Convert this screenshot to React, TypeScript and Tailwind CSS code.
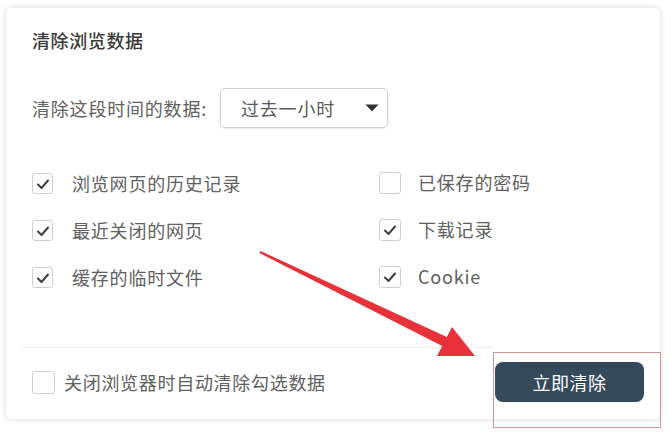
import React from 'react';

const font = { fontFamily: '"Noto Sans CJK SC", "Noto Sans", sans-serif' };

function Check({ checked, size = 'w-[21px] h-[21px]' }: { checked: boolean; size?: string }) {
  return (
    <span className={`${size} shrink-0 rounded-[3px] border border-[#cfcfcf] bg-white flex items-center justify-center`}>
      {checked && (
        <svg width="14" height="12" viewBox="0 0 14 12" fill="none">
          <path d="M2 6.5 L5.5 10 L12 2.5" stroke="#3f3f3f" strokeWidth="2" strokeLinecap="round" strokeLinejoin="round" />
        </svg>
      )}
    </span>
  );
}

const left = [
  { label: '浏览网页的历史记录', checked: true },
  { label: '最近关闭的网页', checked: true },
  { label: '缓存的临时文件', checked: true },
];

const right = [
  { label: '已保存的密码', checked: false },
  { label: '下载记录', checked: true },
  { label: 'Cookie', checked: true },
];

export default function App() {
  return (
    <div className="relative w-[671px] h-[435px] bg-white overflow-hidden" style={font}>
      {/* Dialog card */}
      <div className="ml-[6px] mt-[8px] w-[654px] h-[411px] bg-white rounded-[5px] shadow-[0_0_6px_rgba(0,0,0,0.16)] flex flex-col pt-[20px] pl-[26px] pr-[16px]">
        <h1 className="text-[18px] leading-[24px] tracking-[0.6px] font-medium text-[#3a3a3a]">清除浏览数据</h1>

        <div className="mt-[36px] flex items-center h-[40px]">
          <span className="text-[18px] tracking-[0.8px] text-[#606060]">清除这段时间的数据:</span>
          <div className="ml-[13px] w-[168px] h-[40px] rounded-[5px] border border-[#d0d0d0] shadow-[0_1px_2px_rgba(0,0,0,0.08)] flex items-center pl-[20px] pr-[8px]">
            <span className="text-[18px] tracking-[0.8px] text-[#5a5a5a]">过去一小时</span>
            <svg className="ml-auto" width="14" height="8" viewBox="0 0 14 8">
              <path d="M0.5 0.5 H13.5 L7 7.5 Z" fill="#333" />
            </svg>
          </div>
        </div>

        {/* Options grid */}
        <div className="mt-[32px] flex">
          <div className="w-[347px] flex flex-col">
            {left.map(o => (
              <div key={o.label} className="h-[47px] flex items-center gap-[19px]">
                <Check checked={o.checked} />
                <span className="text-[18px] tracking-[0.8px] text-[#606060]">{o.label}</span>
              </div>
            ))}
          </div>
          <div className="flex flex-col -mt-[1px]">
            {right.map(o => (
              <div key={o.label} className="h-[47px] flex items-center gap-[17px]">
                <Check checked={o.checked} size="w-[22px] h-[22px]" />
                <span className="text-[18px] tracking-[0.8px] text-[#606060]">{o.label}</span>
              </div>
            ))}
          </div>
        </div>

        <div className="mt-[46px] -ml-[10px] w-[470px] h-px bg-[#ebebeb]" />

        {/* Footer */}
        <div className="mt-[14px] flex items-center h-[40px]">
          <Check checked={false} size="w-[23px] h-[23px]" />
          <span className="ml-[9px] text-[18px] tracking-[0.7px] text-[#606060]">关闭浏览器时自动清除勾选数据</span>
          <button className="ml-auto w-[149px] h-[40px] rounded-[8px] bg-[#34495a] text-white text-[18px] tracking-[0.5px] flex items-center justify-center">
            立即清除
          </button>
        </div>
      </div>

      {/* Annotation: highlight box */}
      <div className="absolute left-[493px] top-[352px] w-[168px] h-[76px] border-[1.5px] border-[#cf9494]" />

      {/* Annotation: arrow */}
      <svg className="absolute left-0 top-0 pointer-events-none" width="671" height="435" viewBox="0 0 671 435">
        <polygon
          points="260.4,250.9 446.8,337 452,327 475,356 437,356 442.2,346 259.6,253.1"
          fill="#e8323a"
        />
      </svg>
    </div>
  );
}
